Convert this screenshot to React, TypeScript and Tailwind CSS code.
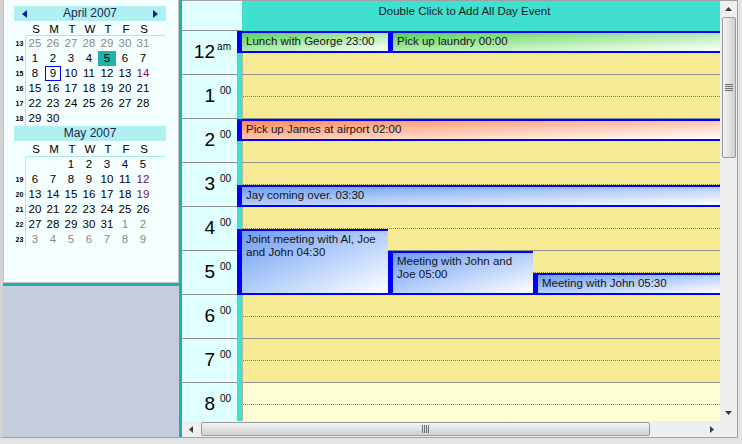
import React from 'react';

type Cell = { d: number | ''; c?: 'g' | 'p' | 'today' | 'sel' };

const april: { wk: string; days: Cell[] }[] = [
  { wk: '13', days: [25, 26, 27, 28, 29, 30, 31].map((d) => ({ d, c: 'g' as const })) },
  { wk: '14', days: [{ d: 1 }, { d: 2 }, { d: 3 }, { d: 4 }, { d: 5, c: 'today' }, { d: 6 }, { d: 7 }] },
  { wk: '15', days: [{ d: 8 }, { d: 9, c: 'sel' }, { d: 10 }, { d: 11 }, { d: 12 }, { d: 13 }, { d: 14, c: 'p' }] },
  { wk: '16', days: [15, 16, 17, 18, 19, 20, 21].map((d) => ({ d })) },
  { wk: '17', days: [22, 23, 24, 25, 26, 27, 28].map((d) => ({ d })) },
  { wk: '18', days: [{ d: 29 }, { d: 30 }, { d: '' }, { d: '' }, { d: '' }, { d: '' }, { d: '' }] },
];

const may: { wk: string; days: Cell[] }[] = [
  { wk: '', days: [{ d: '' }, { d: '' }, { d: 1 }, { d: 2 }, { d: 3 }, { d: 4 }, { d: 5 }] },
  { wk: '19', days: [{ d: 6 }, { d: 7 }, { d: 8 }, { d: 9 }, { d: 10 }, { d: 11 }, { d: 12, c: 'p' }] },
  { wk: '20', days: [{ d: 13 }, { d: 14 }, { d: 15 }, { d: 16 }, { d: 17 }, { d: 18 }, { d: 19, c: 'p' }] },
  { wk: '21', days: [20, 21, 22, 23, 24, 25, 26].map((d) => ({ d })) },
  { wk: '22', days: [{ d: 27 }, { d: 28 }, { d: 29 }, { d: 30 }, { d: 31 }, { d: 1, c: 'g' }, { d: 2, c: 'g' }] },
  { wk: '23', days: [3, 4, 5, 6, 7, 8, 9].map((d) => ({ d, c: 'g' as const })) },
];

const hours = [
  { n: '12', s: 'am' },
  { n: '1', s: '00' },
  { n: '2', s: '00' },
  { n: '3', s: '00' },
  { n: '4', s: '00' },
  { n: '5', s: '00' },
  { n: '6', s: '00' },
  { n: '7', s: '00' },
  { n: '8', s: '00' },
];

// top/height in px from the 12am line; left/width from the left edge of the blue strip
const events = [
  { t: 'Lunch with George 23:00', top: 0, h: 22, left: 0, w: 151, kind: 'green' },
  { t: 'Pick up laundry 00:00', top: 0, h: 22, left: 151, w: 332, kind: 'green' },
  { t: 'Pick up James at airport 02:00', top: 88, h: 22, left: 0, w: 483, kind: 'orange' },
  { t: 'Jay coming over. 03:30', top: 154, h: 22, left: 0, w: 483, kind: 'blue' },
  { t: 'Joint meeting with Al, Joe and John 04:30', top: 198, h: 66, left: 0, w: 151, kind: 'blue' },
  { t: 'Meeting with John and Joe 05:00', top: 220, h: 44, left: 151, w: 145, kind: 'blue' },
  { t: 'Meeting with John 05:30', top: 242, h: 22, left: 296, w: 187, kind: 'blue' },
];

const fills: Record<string, string> = {
  green: 'bg-linear-to-br from-[#4fd24f] to-white',
  orange: 'bg-linear-to-br from-[#ff8a58] to-white',
  blue: 'bg-linear-to-br from-[#6c9cf0] to-white',
};

function Month({ title, arrows, rows, dowH }: { title: string; arrows?: boolean; rows: { wk: string; days: Cell[] }[]; dowH: number }) {
  return (
    <div className="flex flex-col">
      <div className="h-[15px] w-[152px] ml-[10px] bg-[#b0f0f0] flex items-center justify-between px-[8px]">
        <span className="w-[5px]">
          {arrows && (
            <svg width="5" height="8" viewBox="0 0 5 8">
              <path d="M5 0 L0 4 L5 8 Z" fill="#0c1ca8" />
            </svg>
          )}
        </span>
        <span className="text-[12px] leading-[15px] text-[#1b2550]">{title}</span>
        <span className="w-[5px]">
          {arrows && (
            <svg width="5" height="8" viewBox="0 0 5 8">
              <path d="M0 0 L5 4 L0 8 Z" fill="#0c1ca8" />
            </svg>
          )}
        </span>
      </div>
      <div className="flex ml-[23px] text-[11.5px] text-black" style={{ height: dowH }}>
        {['S', 'M', 'T', 'W', 'T', 'F', 'S'].map((d, i) => (
          <span key={i} className="w-[18px] text-center leading-[14px] pt-[1px]">
            {d}
          </span>
        ))}
      </div>
      <div className="ml-[22px] w-[140px] h-px bg-[#a6eaea]" />
      <div className="flex flex-col ml-[10px]">
        {rows.map((r, i) => (
          <div key={i} className="flex h-[15px]">
            <span className="w-[12px] border-r border-[#a6eaea] text-[7px] font-bold leading-[15px] text-center text-black">{r.wk}</span>
            {r.days.map((c, j) => (
              <span
                key={j}
                className={
                  'w-[18px] h-[15px] flex items-center justify-center text-[11.5px] leading-none ' +
                  (c.c === 'g' ? 'text-[#8a8a8a] ' : c.c === 'p' ? 'text-[#7a0a6e] ' : 'text-black ') +
                  (c.c === 'today' ? 'bg-[#20b2aa] ' : '')
                }
              >
                {c.c === 'sel' ? (
                  <span className="border border-[#0000ff] w-[16px] h-[15px] flex items-center justify-center">{c.d}</span>
                ) : (
                  c.d
                )}
              </span>
            ))}
          </div>
        ))}
      </div>
    </div>
  );
}

export default function App() {
  return (
    <div className="w-[742px] h-[444px] bg-[#e4e4e4] font-['Liberation_Sans',Arial,sans-serif] overflow-hidden">
      <div className="flex w-[738px] h-[438px] border-l-[3px] border-l-[#d2d2d2] border-r border-b border-[#a2a2a2] bg-white">
        {/* left side */}
        <div className="w-[176px] flex flex-col">
          <div className="h-[283px] bg-[#f6ffff] border-x border-b border-[#c4c4c4] pt-[6px]">
            <Month title="April 2007" arrows rows={april} dowH={14} />
            <Month title="May 2007" rows={may} dowH={15} />
          </div>
          <div className="h-[3px] bg-[#20b2aa]" />
          <div className="flex-1 bg-[#c5ccdb]" />
        </div>
        <div className="w-[3px] bg-[#20b2aa]" />

        {/* day view */}
        <div className="w-[555px] flex flex-col border-t border-[#a0a0a0]">
          <div className="flex h-[420px]">
            <div className="w-[538px] flex flex-col overflow-hidden">
              <div className="flex h-[30px] shrink-0">
                <div className="w-[60px] bg-[#e0ffff] border-b border-[#8e8e8e]" />
                <div className="flex-1 bg-[#40e0d0] text-[11.5px] leading-[13px] text-[#1a1a1a] text-center pt-[4px] pr-[33px]">
                  Double Click to Add All Day Event
                </div>
              </div>
              <div className="relative flex flex-col">
                {hours.map((h, i) => (
                  <div key={i} className="flex h-[44px] shrink-0">
                    <div className="w-[55px] bg-[#e0ffff] border-b border-[#8e8e8e] flex justify-end items-start pt-[11px] pr-[6px] text-black">
                      <span className="text-[19px] leading-[19px]">{h.n}</span>
                      <span className="w-[16px] text-right text-[10px] leading-[10px]">{h.s}</span>
                    </div>
                    <div className="w-[5px] bg-[#40e0d0]" />
                    <div className={'flex-1 border-b border-l border-l-[#b8b8a0] border-b-[#8e8e8e] pt-[21px] ' + (i === 8 ? 'bg-[#ffffd6]' : 'bg-[#f6ea94]')}>
                      <div className="border-t border-dotted border-[#7a7a7a]" />
                    </div>
                  </div>
                ))}
                <div className="absolute top-0 left-[55px] w-[483px] h-full">
                  {events.map((e, i) => (
                    <div
                      key={i}
                      className={'absolute border-l-[5px] border-y-2 border-[#0000ff] pl-[4px] pr-[5px] pt-[2px] text-[11.5px] leading-[13px] text-[#141414] overflow-hidden ' + fills[e.kind]}
                      style={{ top: e.top, height: e.h, left: e.left, width: e.w }}
                    >
                      {e.t}
                    </div>
                  ))}
                </div>
              </div>
            </div>

            {/* vertical scrollbar */}
            <div className="w-[17px] bg-[#efefef] flex flex-col items-center">
              <div className="h-[16px] flex items-center justify-center">
                <svg width="7" height="4" viewBox="0 0 7 4">
                  <path d="M3.5 0 L7 4 L0 4 Z" fill="#3c3c3c" />
                </svg>
              </div>
              <div className="w-[14px] h-[141px] rounded-[2px] border border-[#9a9a9a] bg-linear-to-r from-[#f4f4f4] via-[#e2e2e2] to-[#cfcfcf] flex items-center justify-center">
                <svg width="8" height="8" viewBox="0 0 8 8">
                  <path d="M0 0.5 H8 M0 2.5 H8 M0 4.5 H8 M0 6.5 H8" stroke="#6a6a6a" strokeWidth="1" />
                </svg>
              </div>
              <div className="flex-1" />
              <div className="h-[16px] flex items-center justify-center">
                <svg width="7" height="4" viewBox="0 0 7 4">
                  <path d="M0 0 L7 0 L3.5 4 Z" fill="#3c3c3c" />
                </svg>
              </div>
            </div>
          </div>

          {/* horizontal scrollbar */}
          <div className="flex h-[16px]">
            <div className="w-[538px] bg-[#efefef] flex items-center">
              <div className="w-[17px] flex items-center justify-center">
                <svg width="4" height="7" viewBox="0 0 4 7">
                  <path d="M0 3.5 L4 0 L4 7 Z" fill="#3c3c3c" />
                </svg>
              </div>
              <div className="ml-[2px] w-[449px] h-[14px] rounded-[2px] border border-[#9a9a9a] bg-linear-to-b from-[#f4f4f4] via-[#e2e2e2] to-[#cfcfcf] flex items-center justify-center">
                <svg width="8" height="8" viewBox="0 0 8 8">
                  <path d="M0.5 0 V8 M2.5 0 V8 M4.5 0 V8 M6.5 0 V8" stroke="#6a6a6a" strokeWidth="1" />
                </svg>
              </div>
              <div className="flex-1" />
              <div className="w-[17px] flex items-center justify-center">
                <svg width="4" height="7" viewBox="0 0 4 7">
                  <path d="M0 0 L4 3.5 L0 7 Z" fill="#3c3c3c" />
                </svg>
              </div>
            </div>
            <div className="w-[17px] bg-[#efefef]" />
          </div>
        </div>
      </div>
    </div>
  );
}
